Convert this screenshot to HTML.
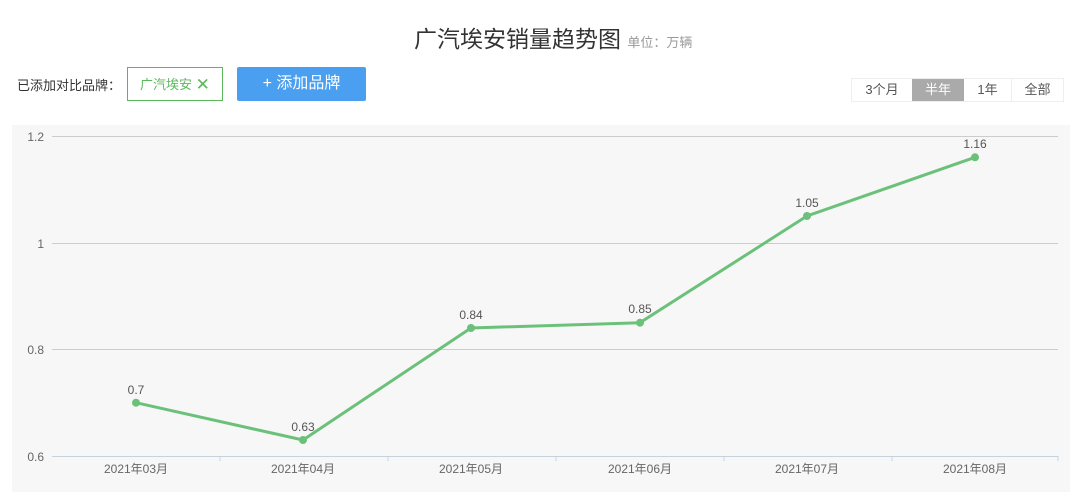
<!DOCTYPE html>
<html><head><meta charset="utf-8"><style>
body{margin:0;width:1080px;height:503px;background:#fff;font-family:"Liberation Sans","Noto Sans CJK SC",sans-serif;position:relative;overflow:hidden}
.a{position:absolute;white-space:nowrap}
</style></head><body>
<div class="a" style="left:414px;top:20px;font-size:23px;color:#333">广汽埃安销量趋势图 <span style="font-size:13px;color:#999">单位：万辆</span></div>
<div class="a" style="left:17px;top:75px;font-size:13px;color:#333">已添加对比品牌：</div>
<div class="a" style="left:127px;top:67px;width:96px;height:34px;border:1px solid #5cb85c;box-sizing:border-box;font-size:13px;color:#5cb85c;line-height:32px;padding-left:12px">广汽埃安 <span style="font-size:17px;position:relative;top:1px">✕</span></div>
<div class="a" style="left:237px;top:67px;width:129px;height:34px;background:#4a9ff0;border-radius:2px;color:#fff;font-size:16px;line-height:34px;text-align:center">+ 添加品牌</div>
<div class="a" style="left:851px;top:78px;height:22px;border:1px solid #eee;display:flex;font-size:13px;color:#555;line-height:22px">
<span style="width:60px;text-align:center">3个月</span><span style="width:52px;text-align:center;background:#aaa;color:#fff">半年</span><span style="width:47px;text-align:center;border-right:1px solid #eee">1年</span><span style="width:51px;text-align:center">全部</span></div>
<svg class="a" style="left:0;top:0" width="1080" height="503" font-family="Liberation Sans, Noto Sans CJK SC, sans-serif">
<rect x="12" y="125" width="1058" height="367" fill="#f7f7f7"/>
<g stroke="#ccc" stroke-width="1"><line x1="52" y1="136.5" x2="1058" y2="136.5"/><line x1="52" y1="243.5" x2="1058" y2="243.5"/><line x1="52" y1="349.5" x2="1058" y2="349.5"/></g>
<line x1="52" y1="456.5" x2="1058" y2="456.5" stroke="#c5d3e0"/>
<g stroke="#c5d3e0"><line x1="220" y1="456" x2="220" y2="461"/><line x1="388" y1="456" x2="388" y2="461"/><line x1="556" y1="456" x2="556" y2="461"/><line x1="724" y1="456" x2="724" y2="461"/><line x1="892" y1="456" x2="892" y2="461"/><line x1="1058" y1="456" x2="1058" y2="461"/></g>
<g font-size="12" fill="#666" text-anchor="end"><text x="44" y="141">1.2</text><text x="44" y="248">1</text><text x="44" y="354">0.8</text><text x="44" y="461">0.6</text></g>
<g font-size="12" fill="#666" text-anchor="middle"><text x="136" y="473">2021年03月</text><text x="303" y="473">2021年04月</text><text x="471" y="473">2021年05月</text><text x="640" y="473">2021年06月</text><text x="807" y="473">2021年07月</text><text x="975" y="473">2021年08月</text></g>
<polyline points="136,402.7 303,440 471,328 640,322.7 807,216 975,157.3" fill="none" stroke="#6cc17a" stroke-width="3"/>
<g fill="#6cc17a"><circle cx="136" cy="402.7" r="4"/><circle cx="303" cy="440" r="4"/><circle cx="471" cy="328" r="4"/><circle cx="640" cy="322.7" r="4"/><circle cx="807" cy="216" r="4"/><circle cx="975" cy="157.3" r="4"/></g>
<g font-size="12" fill="#555" text-anchor="middle"><text x="136" y="394">0.7</text><text x="303" y="431">0.63</text><text x="471" y="319">0.84</text><text x="640" y="313">0.85</text><text x="807" y="207">1.05</text><text x="975" y="148">1.16</text></g>
</svg>
</body></html>
